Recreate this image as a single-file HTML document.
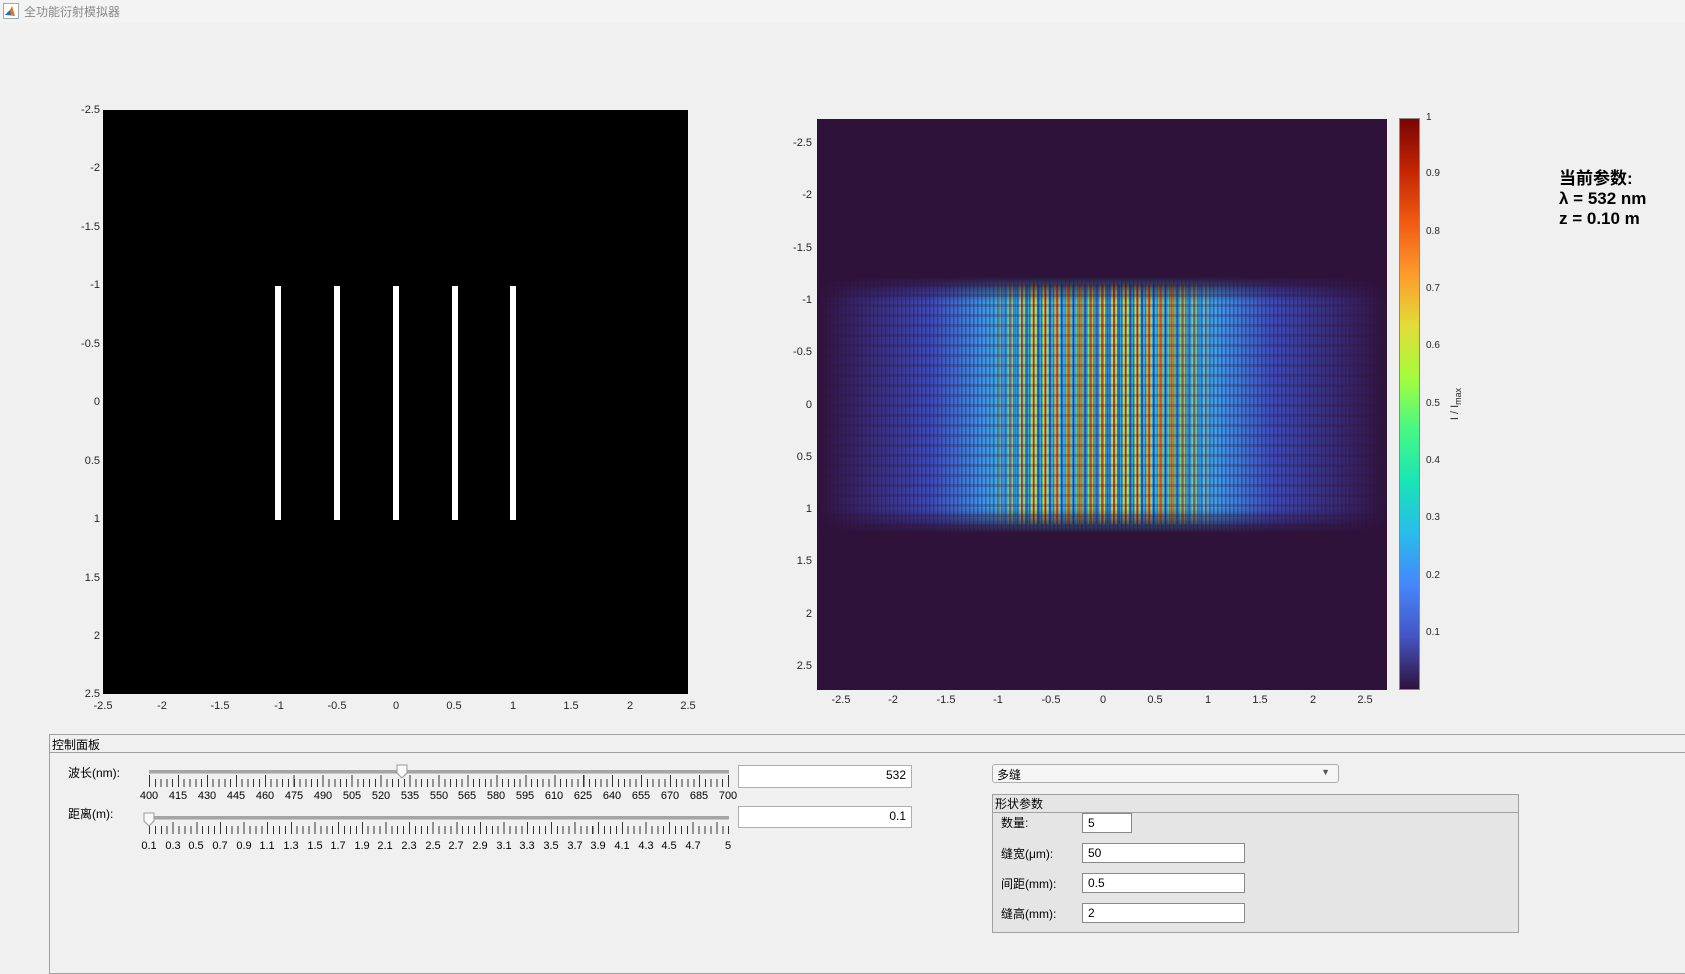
<!DOCTYPE html>
<html><head><meta charset="utf-8"><style>
*{margin:0;padding:0;box-sizing:border-box}
body{width:1685px;height:969px;background:#f0f0f0;position:relative;overflow:hidden;font-family:"Liberation Sans","Noto Sans CJK SC",sans-serif;font-size:11px;color:#262626}
.a{position:absolute}
.c{position:absolute;transform:translate(-50%,-50%);white-space:nowrap}
.r{position:absolute;transform:translate(-100%,-50%);white-space:nowrap}
.in{position:absolute;background:#fff;border:1px solid #adadad;font-size:12px;color:#000;padding:2px 5px;line-height:15px}
.lab{position:absolute;font-size:12px;color:#000}
</style></head><body>
<div class="a" style="left:0;top:0;width:1685px;height:23px;background:#f3f3f3"></div>
<svg class="a" style="left:3px;top:3px" width="16" height="16"><rect x="0.5" y="0.5" width="15" height="15" fill="#fff" stroke="#9ab"/><path d="M2 12 L7 7 L9 3 L12 13 Z" fill="#e8741c"/><path d="M2 12 L7 7 L8 12Z" fill="#2a6fb5"/></svg>
<div class="a" style="left:24px;top:3px;font-size:12px;color:#888">全功能衍射模拟器</div>

<!-- left axes -->
<div class="a" style="left:103px;top:110px;width:585px;height:584px;background:#000"></div>
<div class="a" style="left:275px;top:286px;width:6px;height:234px;background:#fff"></div>
<div class="a" style="left:334px;top:286px;width:6px;height:234px;background:#fff"></div>
<div class="a" style="left:393px;top:286px;width:6px;height:234px;background:#fff"></div>
<div class="a" style="left:452px;top:286px;width:6px;height:234px;background:#fff"></div>
<div class="a" style="left:510px;top:286px;width:6px;height:234px;background:#fff"></div>
<div class="r" style="left:100px;top:110px">-2.5</div><div class="r" style="left:100px;top:168px">-2</div><div class="r" style="left:100px;top:227px">-1.5</div><div class="r" style="left:100px;top:285px">-1</div><div class="r" style="left:100px;top:344px">-0.5</div><div class="r" style="left:100px;top:402px">0</div><div class="r" style="left:100px;top:461px">0.5</div><div class="r" style="left:100px;top:519px">1</div><div class="r" style="left:100px;top:578px">1.5</div><div class="r" style="left:100px;top:636px">2</div><div class="r" style="left:100px;top:694px">2.5</div>
<div class="c" style="left:103px;top:706px">-2.5</div><div class="c" style="left:162px;top:706px">-2</div><div class="c" style="left:220px;top:706px">-1.5</div><div class="c" style="left:279px;top:706px">-1</div><div class="c" style="left:337px;top:706px">-0.5</div><div class="c" style="left:396px;top:706px">0</div><div class="c" style="left:454px;top:706px">0.5</div><div class="c" style="left:513px;top:706px">1</div><div class="c" style="left:571px;top:706px">1.5</div><div class="c" style="left:630px;top:706px">2</div><div class="c" style="left:688px;top:706px">2.5</div>

<!-- heatmap -->
<svg class="a" style="left:817px;top:119px" width="570" height="571">
<defs>
<linearGradient id="hg" x1="0" x2="1"><stop offset="0" stop-color="#2f1239"/><stop offset="0.05" stop-color="#352060"/><stop offset="0.2" stop-color="#3a4cc0"/><stop offset="0.3" stop-color="#3a9cf0"/><stop offset="0.38" stop-color="#2bc6e0"/><stop offset="0.62" stop-color="#2bc6e0"/><stop offset="0.7" stop-color="#3a9cf0"/><stop offset="0.8" stop-color="#3a4cc0"/><stop offset="0.95" stop-color="#352060"/><stop offset="1" stop-color="#2f1239"/></linearGradient>
<linearGradient id="vg" x1="0" x2="0" y1="0" y2="1"><stop offset="0" stop-color="#000"/><stop offset="0.1" stop-color="#fff"/><stop offset="0.9" stop-color="#fff"/><stop offset="1" stop-color="#000"/></linearGradient>
<mask id="m"><rect x="0" y="158" width="570" height="256" fill="url(#vg)"/></mask>
<pattern id="st" width="11.5" height="20" patternUnits="userSpaceOnUse" x="4"><rect width="11.5" height="20" fill="#2fa8ee"/><rect x="2.5" width="6.5" height="20" fill="#7ee860"/><rect x="3.5" width="4.5" height="20" fill="#e8d83a"/><rect x="4.7" width="2" height="20" fill="#e0421a"/><rect x="10" width="1.5" height="20" fill="#3a4cc0"/></pattern>
<pattern id="fine" width="4" height="4" patternUnits="userSpaceOnUse"><rect width="1.5" height="4" fill="#2f1239" opacity="0.4"/></pattern>
<pattern id="rows" width="10" height="10" patternUnits="userSpaceOnUse" y="5"><rect width="10" height="3" fill="#2f1239" opacity="0.25"/></pattern>
<linearGradient id="sg" x1="0" x2="1"><stop offset="0" stop-color="#fff" stop-opacity="0"/><stop offset="0.2" stop-color="#fff" stop-opacity="0.85"/><stop offset="0.8" stop-color="#fff" stop-opacity="0.85"/><stop offset="1" stop-color="#fff" stop-opacity="0"/></linearGradient>
<mask id="sm"><rect x="170" y="0" width="232" height="571" fill="url(#sg)"/></mask>
</defs>
<rect width="570" height="571" fill="#2f1239"/>
<g mask="url(#m)">
<rect x="0" y="158" width="570" height="256" fill="url(#hg)"/>
<g mask="url(#sm)"><rect x="170" y="165" width="232" height="240" fill="url(#st)"/></g>
<rect x="0" y="158" width="570" height="256" fill="url(#fine)"/>
<rect x="0" y="158" width="570" height="256" fill="url(#rows)"/>
</g>
</svg>
<div class="r" style="left:812px;top:143px">-2.5</div><div class="r" style="left:812px;top:195px">-2</div><div class="r" style="left:812px;top:248px">-1.5</div><div class="r" style="left:812px;top:300px">-1</div><div class="r" style="left:812px;top:352px">-0.5</div><div class="r" style="left:812px;top:405px">0</div><div class="r" style="left:812px;top:457px">0.5</div><div class="r" style="left:812px;top:509px">1</div><div class="r" style="left:812px;top:561px">1.5</div><div class="r" style="left:812px;top:614px">2</div><div class="r" style="left:812px;top:666px">2.5</div>
<div class="c" style="left:841px;top:700px">-2.5</div><div class="c" style="left:893px;top:700px">-2</div><div class="c" style="left:946px;top:700px">-1.5</div><div class="c" style="left:998px;top:700px">-1</div><div class="c" style="left:1051px;top:700px">-0.5</div><div class="c" style="left:1103px;top:700px">0</div><div class="c" style="left:1155px;top:700px">0.5</div><div class="c" style="left:1208px;top:700px">1</div><div class="c" style="left:1260px;top:700px">1.5</div><div class="c" style="left:1313px;top:700px">2</div><div class="c" style="left:1365px;top:700px">2.5</div>

<!-- colorbar -->
<div class="a" style="left:1399px;top:118px;width:21px;height:572px;border:1px solid #888;background:linear-gradient(to bottom,#7a0403,#c42503,#f05b12,#fe9b2d,#e1dd37,#a4fc3c,#46f884,#1ae4b6,#28bceb,#4686fb,#4454c4,#30123b)"></div>
<div class="a" style="left:1426px;top:112px;font-size:10px">1</div>
<div class="a" style="left:1426px;top:168px;font-size:10px">0.9</div><div class="a" style="left:1426px;top:226px;font-size:10px">0.8</div><div class="a" style="left:1426px;top:283px;font-size:10px">0.7</div><div class="a" style="left:1426px;top:340px;font-size:10px">0.6</div><div class="a" style="left:1426px;top:398px;font-size:10px">0.5</div><div class="a" style="left:1426px;top:455px;font-size:10px">0.4</div><div class="a" style="left:1426px;top:512px;font-size:10px">0.3</div><div class="a" style="left:1426px;top:570px;font-size:10px">0.2</div><div class="a" style="left:1426px;top:627px;font-size:10px">0.1</div>
<div class="c" style="left:1456px;top:404px;transform:translate(-50%,-50%) rotate(-90deg);font-size:11px">I / I<sub style="font-size:9px">max</sub></div>
<div class="a" style="left:1559px;top:169px;font-size:17px;font-weight:bold;color:#000;line-height:20px">当前参数:<br>λ = 532 nm<br>z = 0.10 m</div>

<!-- control panel -->
<div class="a" style="left:49px;top:734px;width:1640px;height:240px;border:1px solid #a0a0a0"></div>
<div class="a" style="left:49px;top:752px;width:1640px;border-top:1px solid #a0a0a0"></div>
<div class="lab" style="left:52px;top:736px">控制面板</div>
<div class="lab" style="left:68px;top:764px">波长(nm):</div>
<div class="lab" style="left:68px;top:805px">距离(m):</div>
<div class="a" style="left:149px;top:770px;width:580px;height:4px;background:#a5a5a5;border-bottom:1px solid #c8c8c8"></div>
<div class="a" style="left:149px;top:779px;width:580px;height:8px;background:repeating-linear-gradient(to right,#333 0 1px,transparent 1px 5.79px)"></div>
<div class="a" style="left:149px;top:775px;width:580px;height:12px;background:repeating-linear-gradient(to right,#333 0 1px,transparent 1px 28.95px)"></div>
<svg class="a" style="left:396px;top:764px" width="12" height="15"><path d="M1 1H11V9L6 14L1 9Z" fill="#fafafa" stroke="#999"/></svg>
<div class="a" style="left:149px;top:816px;width:580px;height:4px;background:#a5a5a5;border-bottom:1px solid #c8c8c8"></div>
<div class="a" style="left:149px;top:826px;width:580px;height:8px;background:repeating-linear-gradient(to right,#333 0 1px,transparent 1px 5.91px)"></div>
<div class="a" style="left:149px;top:822px;width:580px;height:12px;background:repeating-linear-gradient(to right,#333 0 1px,transparent 1px 23.64px)"></div>
<svg class="a" style="left:143px;top:812px" width="12" height="15"><path d="M1 1H11V9L6 14L1 9Z" fill="#fafafa" stroke="#999"/></svg>
<div style="position:absolute;top:796px;left:0;font-size:11px;color:#000">
<div class="c" style="left:149px">400</div><div class="c" style="left:178px">415</div><div class="c" style="left:207px">430</div><div class="c" style="left:236px">445</div><div class="c" style="left:265px">460</div><div class="c" style="left:294px">475</div><div class="c" style="left:323px">490</div><div class="c" style="left:352px">505</div><div class="c" style="left:381px">520</div><div class="c" style="left:410px">535</div><div class="c" style="left:439px">550</div><div class="c" style="left:467px">565</div><div class="c" style="left:496px">580</div><div class="c" style="left:525px">595</div><div class="c" style="left:554px">610</div><div class="c" style="left:583px">625</div><div class="c" style="left:612px">640</div><div class="c" style="left:641px">655</div><div class="c" style="left:670px">670</div><div class="c" style="left:699px">685</div><div class="c" style="left:728px">700</div>
</div>
<div style="position:absolute;top:846px;left:0;font-size:11px;color:#000">
<div class="c" style="left:149px">0.1</div><div class="c" style="left:173px">0.3</div><div class="c" style="left:196px">0.5</div><div class="c" style="left:220px">0.7</div><div class="c" style="left:244px">0.9</div><div class="c" style="left:267px">1.1</div><div class="c" style="left:291px">1.3</div><div class="c" style="left:315px">1.5</div><div class="c" style="left:338px">1.7</div><div class="c" style="left:362px">1.9</div><div class="c" style="left:385px">2.1</div><div class="c" style="left:409px">2.3</div><div class="c" style="left:433px">2.5</div><div class="c" style="left:456px">2.7</div><div class="c" style="left:480px">2.9</div><div class="c" style="left:504px">3.1</div><div class="c" style="left:527px">3.3</div><div class="c" style="left:551px">3.5</div><div class="c" style="left:575px">3.7</div><div class="c" style="left:598px">3.9</div><div class="c" style="left:622px">4.1</div><div class="c" style="left:646px">4.3</div><div class="c" style="left:669px">4.5</div><div class="c" style="left:693px">4.7</div><div class="c" style="left:728px">5</div>
</div>
<div class="in" style="left:738px;top:765px;width:174px;height:23px;text-align:right">532</div>
<div class="in" style="left:738px;top:806px;width:174px;height:22px;text-align:right">0.1</div>

<div class="a" style="left:992px;top:764px;width:347px;height:19px;border:1px solid #adadad;border-radius:3px;background:#f5f5f5;font-size:12px;padding:1px 4px;color:#000">多缝<span style="position:absolute;right:8px;top:2px;font-size:9px;color:#555">▼</span></div>
<div class="a" style="left:992px;top:794px;width:527px;height:139px;border:1px solid #a0a0a0;background:#e5e5e5"></div>
<div class="a" style="left:992px;top:812px;width:527px;border-top:1px solid #a0a0a0"></div>
<div class="lab" style="left:995px;top:795px">形状参数</div>
<div class="lab" style="left:1001px;top:814px">数量:</div>
<div class="lab" style="left:1001px;top:845px">缝宽(μm):</div>
<div class="lab" style="left:1001px;top:875px">间距(mm):</div>
<div class="lab" style="left:1001px;top:905px">缝高(mm):</div>
<div class="in" style="left:1082px;top:813px;width:50px;height:20px;border-color:#888">5</div>
<div class="in" style="left:1082px;top:843px;width:163px;height:20px;border-color:#888">50</div>
<div class="in" style="left:1082px;top:873px;width:163px;height:20px;border-color:#888">0.5</div>
<div class="in" style="left:1082px;top:903px;width:163px;height:20px;border-color:#888">2</div>
</body></html>
